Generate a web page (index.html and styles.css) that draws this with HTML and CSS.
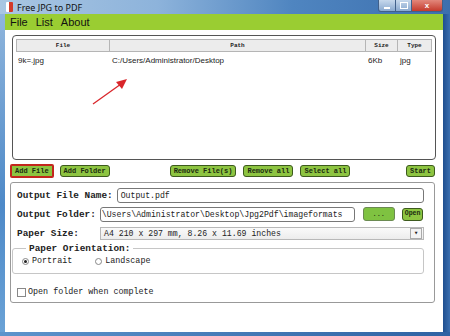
FILE: index.html
```html
<!DOCTYPE html>
<html lang="en">
<head>
    <meta charset="UTF-8">
    <title>Free JPG to PDF</title>
    <link rel="stylesheet" href="styles.css">
</head>
<body>
    <div class="window">
        <div class="titlebar">
            <span class="app-icon"></span>
            <span class="title">Free JPG to PDF</span>
            <div class="controls">
                <span class="ctl ctl-min"><i></i></span>
                <span class="ctl ctl-max"><i></i></span>
                <span class="ctl ctl-close">x</span>
            </div>
        </div>
        <div class="main">
            <div class="frame-left"></div>
            <div class="client">
                <div class="menubar">
                    <span>File</span>
                    <span>List</span>
                    <span>About</span>
                </div>
                <div class="content">
                    <div class="listbox">
                        <div class="list-head">
                            <div class="col col-file">File</div>
                            <div class="col col-path">Path</div>
                            <div class="col col-size">Size</div>
                            <div class="col col-type">Type</div>
                        </div>
                        <div class="list-row">
                            <div class="col col-file">9k=.jpg</div>
                            <div class="col col-path">C:/Users/Administrator/Desktop</div>
                            <div class="col col-size">6Kb</div>
                            <div class="col col-type">jpg</div>
                        </div>
                        <!-- red arrow drawn over the list -->
                        <svg class="arrow" width="40" height="30" viewBox="0 0 40 30">
                            <line x1="2" y1="28" x2="30" y2="8" stroke="#d9262b" stroke-width="1.3"/>
                            <polygon points="36,3 25,6 31,13" fill="#d9262b"/>
                        </svg>
                    </div>

                    <div class="buttons">
                        <div class="btn-group">
                            <button class="btn btn-active">Add File</button>
                            <button class="btn">Add Folder</button>
                        </div>
                        <div class="btn-group mid">
                            <button class="btn">Remove File(s)</button>
                            <button class="btn">Remove all</button>
                            <button class="btn">Select all</button>
                        </div>
                        <button class="btn">Start</button>
                    </div>

                    <div class="panel">
                        <div class="form-row">
                            <label class="lbl">Output File Name:</label>
                            <div class="field field-name">Output.pdf</div>
                        </div>
                        <div class="form-row">
                            <label class="lbl">Output Folder:</label>
                            <div class="field field-folder">\Users\Administrator\Desktop\Jpg2Pdf\imageformats</div>
                            <button class="btn btn-dots">...</button>
                            <button class="btn btn-open">Open</button>
                        </div>
                        <div class="form-row">
                            <label class="lbl lbl-size">Paper Size:</label>
                            <div class="select">
                                <span>A4 210 x 297 mm, 8.26 x 11.69 inches</span>
                                <span class="drop">&#9662;</span>
                            </div>
                        </div>
                        <fieldset class="orient">
                            <legend>Paper Orientation:</legend>
                            <div class="radios">
                                <span class="radio on"></span><span class="opt">Portrait</span>
                                <span class="radio"></span><span class="opt">Landscape</span>
                            </div>
                        </fieldset>
                        <div class="check-row">
                            <span class="check"></span>
                            <span>Open folder when complete</span>
                        </div>
                    </div>
                </div>
            </div>
            <div class="frame-right"></div>
        </div>
        <div class="frame-bottom"></div>
    </div>
</body>
</html>
```

FILE: styles.css
```css
body {
    margin: 0;
    width: 450px;
    height: 336px;
    overflow: hidden;
    background: #3f78b8;
    font-family: 'Liberation Sans', Arial, sans-serif;
}

.window {
    display: flex;
    flex-direction: column;
    height: 336px;
}

/* title bar */
.titlebar {
    height: 14px;
    display: flex;
    align-items: center;
    background: linear-gradient(90deg, #a9c6e2 0%, #8db3db 35%, #4f85c0 65%, #3c6fae 100%);
}

.app-icon {
    width: 7px;
    height: 10px;
    margin-left: 6px;
    background: linear-gradient(90deg, #fff 0 40%, #d23a2a 40%);
    border-radius: 1px;
}

.title {
    margin-left: 4px;
    font-family: 'Noto Sans', sans-serif;
    font-size: 9px;
    color: #111;
}

.controls {
    margin-left: auto;
    margin-right: 7px;
    display: flex;
    height: 12px;
    align-self: flex-start;
}

.ctl {
    height: 12px;
    border: 1px solid #41608a;
    border-top: none;
    box-sizing: border-box;
    display: flex;
    align-items: center;
    justify-content: center;
    background: linear-gradient(#c6d8ec, #8aa9cf);
}

.ctl-min { width: 18px; border-bottom-left-radius: 3px; }
.ctl-min i { width: 6px; height: 2px; background: #fff; margin-top: 4px; }
.ctl-max { width: 16px; border-left: none; }
.ctl-max i { width: 6px; height: 5px; border: 1px solid #fff; }
.ctl-close {
    width: 31px;
    border-left: none;
    border-bottom-right-radius: 3px;
    background: linear-gradient(#e2877b, #c43a2c);
    color: #fff;
    font-size: 8px;
    font-weight: bold;
}

.main {
    flex: 1;
    display: flex;
}

.frame-left {
    width: 5px;
    background: linear-gradient(#8fb5dc, #4d89c8 60%, #6aa2d6);
}

.frame-right {
    width: 7px;
    background: linear-gradient(90deg, #1f4f8f, #3b6fb0);
}

.frame-bottom {
    height: 4px;
    background: linear-gradient(90deg, #5d94cc, #2f62a3);
}

.client {
    flex: 1;
    display: flex;
    flex-direction: column;
    background: #fff;
}

.menubar {
    height: 16px;
    background: #9acd32;
    display: flex;
    align-items: center;
    gap: 8px;
    padding-left: 5px;
    font-size: 11px;
    color: #111;
}

.content {
    flex: 1;
    padding: 5px 7px 0 5px;
}

/* file list */
.listbox {
    position: relative;
    margin-left: 2px;
    height: 125px;
    border: 1px solid #555;
    border-radius: 4px;
    padding: 3px;
    box-sizing: border-box;
}

.list-head {
    display: flex;
    height: 13px;
}

.list-head .col {
    background: #ececec;
    border: 1px solid #b5b5b5;
    border-left: none;
    box-sizing: border-box;
    font-family: 'Liberation Mono', monospace;
    font-weight: bold;
    font-size: 6px;
    color: #222;
    text-align: center;
    line-height: 11px;
}

.list-head .col-file { border-left: 1px solid #b5b5b5; }

.col-file { width: 94px; }
.col-path { width: 256px; }
.col-size { width: 32px; }
.col-type { width: 34px; }

.list-row {
    display: flex;
    margin-top: 4px;
    font-size: 8px;
    color: #222;
}

.list-row .col { padding-left: 2px; box-sizing: border-box; }

.arrow {
    position: absolute;
    left: 78px;
    top: 40px;
}

/* buttons */
.buttons {
    display: flex;
    align-items: center;
    margin-top: 5px;
    height: 12px;
    padding-left: 1px;
}

.btn-group {
    display: flex;
    gap: 7px;
}

.btn-group.mid {
    margin-left: 60px;
    gap: 7px;
}

.buttons > .btn:last-child {
    margin-left: auto;
    margin-right: 1px;
}

.btn {
    height: 12px;
    padding: 0 3px;
    background: #8dc441;
    border: 1px solid #3d5a1e;
    border-radius: 3px;
    font-family: 'Liberation Mono', monospace;
    font-weight: bold;
    font-size: 7px;
    color: #1b2a10;
    line-height: 10px;
    box-sizing: border-box;
    flex-shrink: 0;
}

.btn-active {
    border-color: #c3261d;
    box-shadow: 0 0 0 1px #c3261d;
    border-radius: 1px;
}

/* settings panel */
.panel {
    margin-top: 5px;
    margin-right: 1px;
    border: 1px solid #999;
    border-radius: 3px;
    height: 121px;
    box-sizing: border-box;
    padding: 4px 10px 0 6px;
    font-family: 'Liberation Mono', monospace;
    font-size: 9px;
    color: #222;
}

.form-row {
    display: flex;
    align-items: center;
    height: 16px;
    margin-bottom: 3px;
}

.lbl {
    font-weight: bold;
    font-size: 9.4px;
    margin-right: 4px;
    white-space: nowrap;
    flex-shrink: 0;
}

.field {
    height: 15px;
    border: 1px solid #777;
    border-radius: 3px;
    box-sizing: border-box;
    font-size: 8.2px;
    line-height: 13px;
    padding-left: 3px;
    white-space: nowrap;
    overflow: hidden;
}

.field-name { flex: 1; }
.field-folder { width: 255px; padding-left: 1px; flex-shrink: 0; }

.btn-dots {
    width: 32px;
    height: 14px;
    margin-left: 8px;
    background: #7fc241;
    border-color: #6b8a52;
    font-weight: normal;
}

.btn-open {
    margin-left: 7px;
    height: 13px;
    padding: 0 2px;
    font-size: 6.5px;
}

.lbl-size { width: 79px; }

.select {
    flex: 1;
    height: 13px;
    border: 1px solid #b8b8b8;
    box-sizing: border-box;
    display: flex;
    align-items: center;
    font-size: 8.2px;
    padding-left: 3px;
    background: linear-gradient(#fafafa, #ececec);
}

.drop {
    margin-left: auto;
    width: 10px;
    height: 9px;
    border: 1px solid #aaa;
    background: #f3f3f3;
    font-size: 7px;
    line-height: 9px;
    text-align: center;
    margin-right: 1px;
}

.orient {
    margin: 0 0 0 -5px;
    padding: 0 0 6px 9px;
    border: 1px solid #c6c6c6;
    border-radius: 3px;
    height: 30px;
    box-sizing: border-box;
}

.orient legend {
    font-weight: bold;
    font-size: 9.4px;
    padding: 0 3px;
    margin-left: 4px;
    line-height: 9px;
}

.radios {
    display: flex;
    align-items: center;
    margin-top: 3px;
    font-size: 8.4px;
}

.radio {
    width: 7px;
    height: 7px;
    border: 1px solid #888;
    border-radius: 50%;
    box-sizing: border-box;
    margin-right: 3px;
    position: relative;
}

.radio.on::after {
    content: "";
    position: absolute;
    left: 1px;
    top: 1px;
    width: 3px;
    height: 3px;
    border-radius: 50%;
    background: #222;
}

.opt + .radio { margin-left: 23px; }

.check-row {
    display: flex;
    align-items: center;
    margin-top: 13px;
    font-size: 8.4px;
}

.check {
    width: 7px;
    height: 7px;
    border: 1px solid #888;
    margin-right: 2px;
}
```
